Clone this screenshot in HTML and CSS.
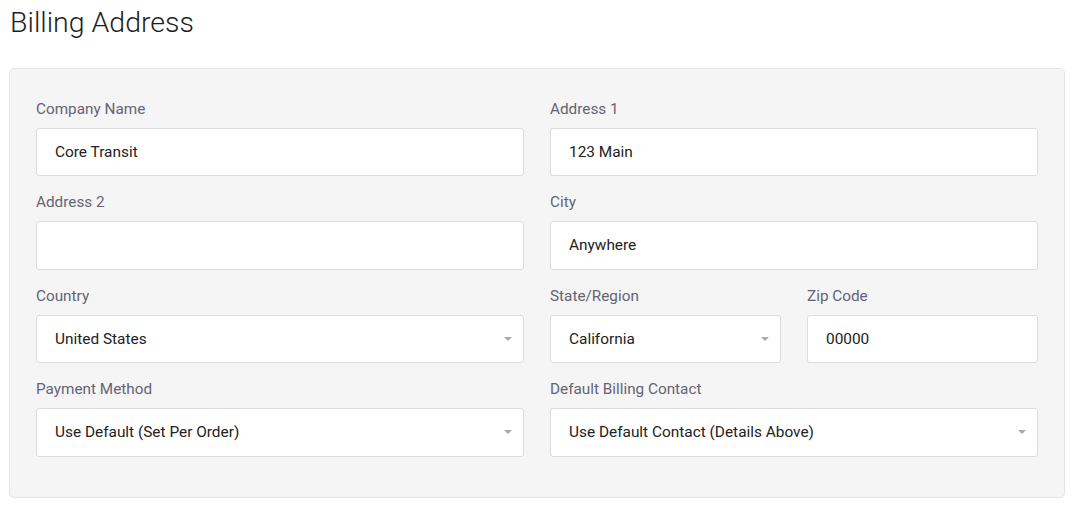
FILE: index.html
```
<!DOCTYPE html>
<html>
<head>
  <link rel="stylesheet" href="styles.css">
</head>
<body>
  <h1 class="page-title">Billing Address</h1>

  <div class="panel">
    <div class="form-grid">
      <div class="field">
        <label class="field-label">Company Name</label>
        <div class="input">Core Transit</div>
      </div>
      <div class="field">
        <label class="field-label">Address 1</label>
        <div class="input">123 Main</div>
      </div>
      <div class="field">
        <label class="field-label">Address 2</label>
        <div class="input"></div>
      </div>
      <div class="field">
        <label class="field-label">City</label>
        <div class="input">Anywhere</div>
      </div>
      <div class="field">
        <label class="field-label">Country</label>
        <div class="input select">United States</div>
      </div>
      <div class="split">
        <div class="field">
          <label class="field-label">State/Region</label>
          <div class="input select">California</div>
        </div>
        <div class="field">
          <label class="field-label">Zip Code</label>
          <div class="input">00000</div>
        </div>
      </div>
      <div class="field">
        <label class="field-label">Payment Method</label>
        <div class="input select">Use Default (Set Per Order)</div>
      </div>
      <div class="field">
        <label class="field-label">Default Billing Contact</label>
        <div class="input select">Use Default Contact (Details Above)</div>
      </div>
    </div>
  </div>
</body>
</html>
```

FILE: styles.css
```
body {
  margin: 0;
  padding: 0 11px 0 9px;
  font-family: Roboto, "Noto Sans", sans-serif;
  background: #fff;
  color: #222;
}
.page-title {
  font-size: 28.5px;
  font-weight: 300;
  margin: 0;
  padding: 5px 0 0 1px;
  line-height: 36px;
  height: 63px;
  color: #1d1d1f;
}
.panel {
  background: #f5f5f5;
  border: 1px solid #e4e4e4;
  border-radius: 5px;
  padding: 30px 26px 24px;
}
.form-grid {
  display: grid;
  grid-template-columns: 1fr 1fr;
  column-gap: 26px;
}
.split {
  display: grid;
  grid-template-columns: 1fr 1fr;
  column-gap: 26px;
}
.field {
  display: flex;
  flex-direction: column;
  margin-bottom: 16px;
}
.field-label {
  font-size: 15.3px;
  line-height: 21px;
  color: #646474;
  margin-bottom: 8px;
}
.input {
  box-sizing: border-box;
  height: 48.4px;
  background: #fff;
  border: 1px solid #dcdcdc;
  border-radius: 3px;
  padding: 0 18px;
  font-size: 15.4px;
  line-height: 46px;
  color: #222;
}
.select {
  position: relative;
}
.select::after {
  content: "";
  position: absolute;
  right: 11px;
  top: 21px;
  border-left: 4px solid transparent;
  border-right: 4px solid transparent;
  border-top: 4px solid #a9a9ae;
}
```
